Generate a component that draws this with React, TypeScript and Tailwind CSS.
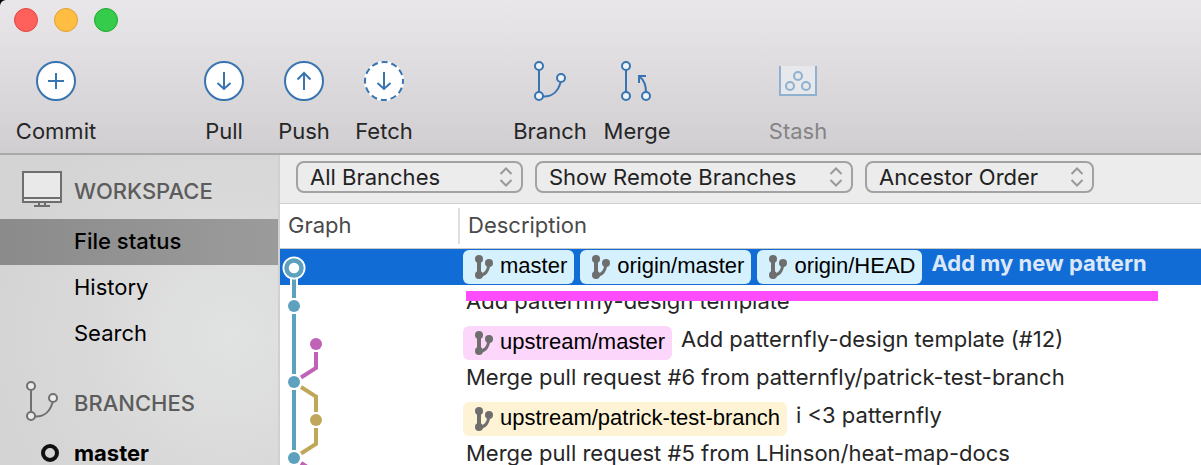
import type { ReactNode } from "react";

const BLUE = "#5ea1bf";
const PURPLE = "#c062b8";
const GOLD = "#c0a85a";

function BranchGlyph({ color, fill, line = 2 }: { color: string; fill: string; line?: number }) {
  return (
    <svg width="34" height="40" viewBox="0 0 34 40" fill="none" stroke={color} strokeWidth={line} aria-hidden="true">
      <path d="M6 9.500V30.500M10 35.500C20 36 25.500 29 27.500 21.500" />
      <circle cx="6" cy="5" r="4" fill={fill} />
      <circle cx="6" cy="35" r="4" fill={fill} />
      <circle cx="28" cy="17" r="4" fill={fill} />
    </svg>
  );
}

function CircleGlyph({ d, dashed = false }: { d: string; dashed?: boolean }) {
  return (
    <svg width="40" height="40" viewBox="0 0 40 40" fill="none" stroke="#3874b0" strokeWidth="2" aria-hidden="true">
      {dashed && <circle cx="20" cy="20" r="20" fill="#fff" stroke="none" />}
      <circle cx="20" cy="20" r="19" fill="#fff" strokeDasharray={dashed ? "6.2 3.750" : undefined} strokeDashoffset={dashed ? 3.1 : undefined} />
      <path d={d} />
    </svg>
  );
}

function MergeGlyph() {
  return (
    <svg width="34" height="40" viewBox="0 0 34 40" fill="none" stroke="#3874b0" strokeWidth="2" aria-hidden="true">
      <path d="M6 9V31M26 31C26 24 24 19 19.500 15.500M19 22V15H26" />
      <circle cx="6" cy="5" r="4" fill="#eef3f8" />
      <circle cx="6" cy="35" r="4" fill="#eef3f8" />
      <circle cx="26" cy="35" r="4" fill="#eef3f8" />
    </svg>
  );
}

function StashGlyph() {
  return (
    <svg width="40" height="40" viewBox="0 0 40 40" fill="none" stroke="#8fb0cf" strokeWidth="2" aria-hidden="true">
      <path d="M2 5V34H38V5" fill="#e6e8ec" />
      <circle cx="20" cy="15" r="4" />
      <circle cx="12" cy="25" r="4" />
      <circle cx="28" cy="25" r="4" />
    </svg>
  );
}

function ToolButton({ label, icon, width = "w-20", disabled = false }: { label: string; icon: ReactNode; width?: string; disabled?: boolean }) {
  return (
    <button type="button" disabled={disabled} className={`${width} flex shrink-0 flex-col items-center gap-4 text-[#262626] disabled:text-[#858487]`}>
      {icon}
      <span className="leading-7">{label}</span>
    </button>
  );
}

function Filter({ label, options, width }: { label: string; options: string[]; width: string }) {
  return (
    <div className={`${width} relative`}>
      <select aria-label={label} className="h-8 w-full appearance-none rounded-lg border-2 border-[#a2a2a2] bg-[#ececec] pr-8 pl-3 leading-7 text-[#222]">
        {options.map((o) => (
          <option key={o}>{o}</option>
        ))}
      </select>
      <svg className="pointer-events-none absolute top-1.5 right-2.5" width="14" height="20" viewBox="0 0 14 20" fill="none" stroke="#999" strokeWidth="2" aria-hidden="true">
        <path d="M1.500 7L7 1.500L12.500 7M1.500 13L7 18.500L12.500 13" />
      </svg>
    </div>
  );
}

function Ref({ name, tone }: { name: string; tone: string }) {
  return (
    <span className={`${tone} flex h-[34px] items-center gap-[7px] rounded-md pr-[7px] pl-3 font-['Liberation_Sans',Arial,sans-serif] leading-7 text-black`}>
      <svg width="18" height="24" viewBox="0 0 18 24" fill="none" stroke="#6e6e6e" strokeWidth="4" aria-hidden="true">
        <path d="M4 4V20" />
        <path d="M4 20C10 20.500 13.500 16 14 8" strokeWidth="3" />
        <g fill="#6e6e6e" stroke="none">
          <circle cx="4" cy="4" r="4" />
          <circle cx="4" cy="20" r="4" />
          <circle cx="14" cy="8" r="4" />
        </g>
      </svg>
      <span className="pb-0.5">{name}</span>
    </span>
  );
}

type Commit = { message: string; refs?: string[]; tone?: string; selected?: boolean; graph: ReactNode };

const commits: Commit[] = [
  {
    message: "Add my new pattern",
    refs: ["master", "origin/master", "origin/HEAD"],
    tone: "bg-[#d6f1fe]",
    selected: true,
    graph: (
      <>
        <path d="M14 30V38" stroke="#fff" strokeWidth="8" />
        <path d="M14 30V49" stroke={BLUE} strokeWidth="4" />
        <circle cx="14" cy="19" r="11.500" fill="#fff" />
        <circle cx="14" cy="19" r="7.500" fill="#fff" stroke={BLUE} strokeWidth="4.500" />
      </>
    ),
  },
  {
    message: "Add patternfly-design template",
    graph: (
      <>
        <path d="M14 27V38" stroke={BLUE} strokeWidth="4" />
        <circle cx="14" cy="19" r="6" fill={BLUE} />
      </>
    ),
  },
  {
    message: "Add patternfly-design template (#12)",
    refs: ["upstream/master"],
    tone: "bg-[#fdd6fb]",
    graph: (
      <>
        <path d="M14 0V38" stroke={BLUE} strokeWidth="4" />
        <path d="M36 27V43L21 52.500" stroke={PURPLE} strokeWidth="4" />
        <circle cx="36" cy="19" r="6" fill={PURPLE} />
      </>
    ),
  },
  {
    message: "Merge pull request #6 from patternfly/patrick-test-branch",
    graph: (
      <>
        <path d="M14 0V11M14 27V38" stroke={BLUE} strokeWidth="4" />
        <path d="M21 24L36 33.500V49" stroke={GOLD} strokeWidth="4" />
        <circle cx="14" cy="19" r="6" fill={BLUE} />
      </>
    ),
  },
  {
    message: "i <3 patternfly",
    refs: ["upstream/patrick-test-branch"],
    tone: "bg-[#fef4d5]",
    graph: (
      <>
        <path d="M14 0V38" stroke={BLUE} strokeWidth="4" />
        <path d="M36 27V43L21 52.500" stroke={GOLD} strokeWidth="4" />
        <circle cx="36" cy="19" r="6" fill={GOLD} />
      </>
    ),
  },
  {
    message: "Merge pull request #5 from LHinson/heat-map-docs",
    graph: (
      <>
        <path d="M14 0V11M14 27V38" stroke={BLUE} strokeWidth="4" />
        <path d="M21 24L36 33.500V38" stroke={PURPLE} strokeWidth="4" />
        <circle cx="14" cy="19" r="6" fill={BLUE} />
      </>
    ),
  },
];

function CommitRow({ commit }: { commit: Commit }) {
  return (
    <tr className={commit.selected ? "bg-[linear-gradient(#116cd6_36px,#fff_36px)]" : ""}>
      <td className="p-0">
        <svg className="block overflow-visible" width="60" height="38" viewBox="0 0 60 38" fill="none" aria-hidden="true">
          {commit.graph}
        </svg>
      </td>
      <td className="relative p-0">
        <div className="flex h-[38px] items-start gap-1.5 pt-px pl-[3px] whitespace-nowrap">
          {commit.refs?.map((r) => <Ref key={r} name={r} tone={commit.tone ?? ""} />)}
          <span className={commit.selected ? "pl-[3px] leading-[26px] font-bold text-[#dce8f9]" : "pl-[3px] leading-[26px] text-[#262626]"}>{commit.message}</span>
        </div>
        {commit.selected && <div className="absolute top-[42px] left-1.5 z-10 h-2.5 w-[692px] bg-[#fe4bfb]" />}
      </td>
    </tr>
  );
}

function SideHeading({ icon, children, gap }: { icon: ReactNode; children: ReactNode; gap: string }) {
  return (
    <h2 className={`${gap} flex h-[60px] items-center font-medium text-[#5c5c5c]`}>
      <span className="flex w-[74px] pl-[21px]">{icon}</span>
      <span className="pt-1">{children}</span>
    </h2>
  );
}

const light = "size-6 rounded-full border";

export default function App() {
  return (
    <div className="flex h-screen flex-col overflow-hidden bg-black font-['Inter','Liberation_Sans',sans-serif] text-[22px] leading-7">
      <header className="shrink-0 rounded-tl-md border-b-2 border-[#aaa8ab] bg-linear-to-b from-[#e9e7e9] to-[#d0ced1] pb-2">
        <div className="flex gap-4 pt-2 pl-3.5">
          <button type="button" aria-label="Close" className={`${light} border-[#e2463f] bg-[#fe605c]`} />
          <button type="button" aria-label="Minimize" className={`${light} border-[#dfa033] bg-[#ffbe41]`} />
          <button type="button" aria-label="Zoom" className={`${light} border-[#1fa934] bg-[#35cb4b]`} />
        </div>
        <div className="mt-[29px] flex pl-4">
          <ToolButton label="Commit" icon={<CircleGlyph d="M12 20H28M20 12V28" />} />
          <div className="ml-22 flex">
            <ToolButton label="Pull" icon={<CircleGlyph d="M20 11V28M13.500 22L20 28L26.500 22" />} />
            <ToolButton label="Push" icon={<CircleGlyph d="M20 29V12M13.500 18.500L20 12L26.500 18.500" />} />
            <ToolButton label="Fetch" icon={<CircleGlyph dashed d="M20 11V28M13.500 22L20 28L26.500 22" />} />
          </div>
          <div className="ml-[82px] flex">
            <ToolButton label="Branch" width="w-[88px]" icon={<BranchGlyph color="#3874b0" fill="#eef3f8" />} />
            <ToolButton label="Merge" width="w-[86px]" icon={<MergeGlyph />} />
          </div>
          <div className="ml-[78px] flex">
            <ToolButton label="Stash" disabled icon={<StashGlyph />} />
          </div>
        </div>
      </header>

      <div className="flex min-h-0 flex-1">
        <nav className="w-[280px] shrink-0 border-r-2 border-[#d0d0d0] bg-[#d5d5d5] bg-[radial-gradient(circle_at_230px_180px,#e1e3e2,#d9d9d9_140px,#d4d4d4_240px)] text-black">
          <SideHeading
            gap="mt-1"
            icon={
              <svg width="42" height="36" viewBox="0 0 42 36" fill="none" stroke="#6e6e6e" strokeWidth="2" aria-hidden="true">
                <path d="M2 1H40V31H2Z" fill="#e9e9e9" />
                <path d="M2 27H40M18 31V35M24 31V35M13 35H29" />
              </svg>
            }
          >
            WORKSPACE
          </SideHeading>
          <ul>
            <li>
              <a href="#status" aria-current="page" className="block bg-linear-to-r from-[#8b8b8b] to-[#9b9b9b] pt-2 pb-2.5 pl-[74px] font-medium">File status</a>
            </li>
            <li>
              <a href="#history" className="block pt-2 pb-2.5 pl-[74px]">History</a>
            </li>
            <li>
              <a href="#search" className="block pt-2 pb-2.5 pl-[74px]">Search</a>
            </li>
          </ul>
          <SideHeading
            gap="mt-3.5"
            icon={<span className="pl-1"><BranchGlyph color="#707070" fill="#ececec" /></span>}
          >
            BRANCHES
          </SideHeading>
          <a href="#master" className="flex items-center pt-2 pb-2.5 font-bold">
            <span className="flex w-[74px] pl-[41px]">
              <span className="size-[18px] rounded-full border-4 border-[#111]" />
            </span>
            master
          </a>
        </nav>

        <main className="min-w-0 flex-1 bg-white">
          <div className="flex gap-3 border-b border-[#d0d0d0] bg-[#ececec] px-4 pt-1.5 pb-2.5">
            <Filter label="Branches" width="w-[227px]" options={["All Branches", "Current Branch"]} />
            <Filter label="Remote branches" width="w-[318px]" options={["Show Remote Branches", "Hide Remote Branches"]} />
            <Filter label="Order" width="w-[229px]" options={["Ancestor Order", "Date Order"]} />
          </div>
          <table className="w-full table-fixed border-separate border-spacing-0">
            <thead>
              <tr className="text-left text-[#4a4a4a]">
                <th scope="col" className="w-[180px] border-b border-[#c8c8c8] py-1 pr-0 pl-2 font-normal">
                  <span className="block border-r-2 border-[#dfdfdf] pt-[3px] pb-[5px]">Graph</span>
                </th>
                <th scope="col" className="border-b border-[#c8c8c8] pt-[3px] pb-[5px] pl-2 font-normal">Description</th>
              </tr>
            </thead>
            <tbody>
              {commits.map((c) => (
                <CommitRow key={c.message} commit={c} />
              ))}
            </tbody>
          </table>
        </main>
      </div>
    </div>
  );
}
